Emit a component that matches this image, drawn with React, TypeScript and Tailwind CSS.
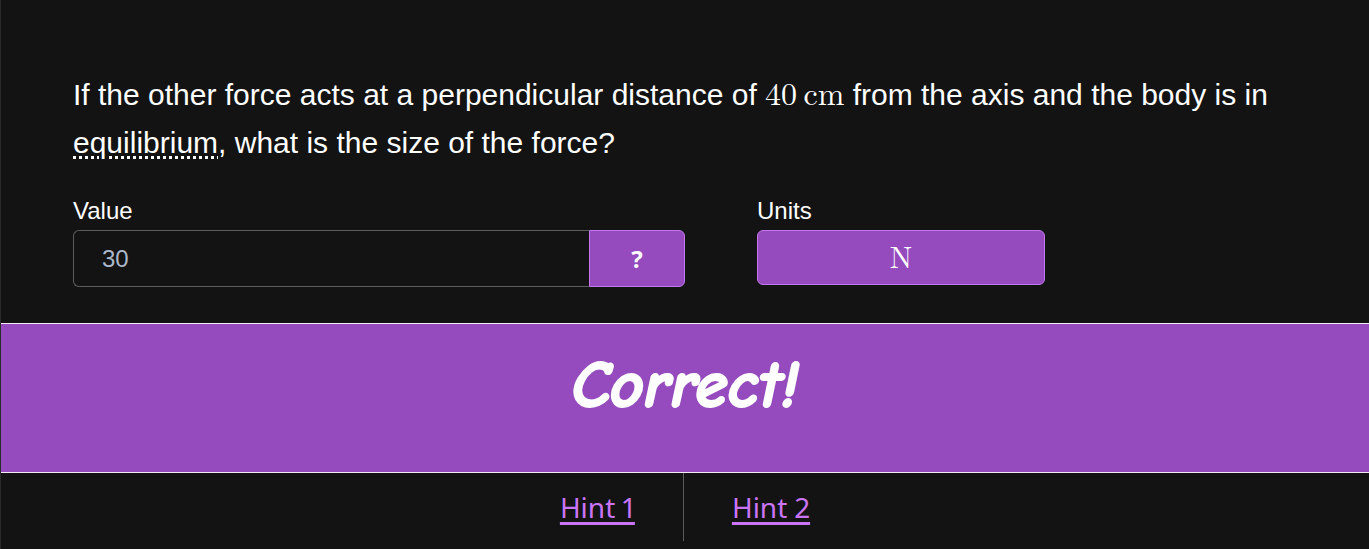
import { useState } from 'react';

function Maths({ children }: { children: React.ReactNode }) {
  return (
    <span className="font-['Latin_Modern_Roman','Liberation_Serif',serif] text-[32px] leading-none">
      {children}
    </span>
  );
}

function AnswerFields() {
  const [value, setValue] = useState('30');
  return (
    <div className="mt-7 flex gap-[72px]">
      <div className="w-1/2">
        <label htmlFor="value" className="block text-2xl leading-8">
          Value
        </label>
        <div className="mt-[3px] flex h-[57px]">
          <input
            id="value"
            value={value}
            onChange={(e) => setValue(e.target.value)}
            className="min-w-0 flex-1 rounded-l-md border border-r-0 border-[#5c5c5c] bg-transparent px-7 text-2xl text-[#abb8c9] outline-none"
          />
          <button
            type="button"
            aria-label="Help with the value"
            className="w-24 rounded-r-md border border-[#c477ee] bg-[#954bbd] font-['Noto_Sans',sans-serif] text-2xl font-bold"
          >
            ?
          </button>
        </div>
      </div>
      <div className="w-72">
        <label htmlFor="units" className="block text-2xl leading-8">
          Units
        </label>
        <button
          id="units"
          type="button"
          className="mt-[3px] h-[55px] w-full rounded-md border border-[#c477ee] bg-[#954bbd] pb-1 font-['Latin_Modern_Roman','Liberation_Serif',serif] text-[30px] leading-none"
        >
          N
        </button>
      </div>
    </div>
  );
}

export default function App() {
  return (
    <main className="min-h-screen border-l border-[#2a2a2a] bg-[#131313] font-['Liberation_Sans',Arial,sans-serif] text-white">
      <section className="px-[72px] pt-[71px] pb-9">
        <p className="text-3xl leading-12">
          If the other force acts at a perpendicular distance of <Maths>40&thinsp;cm</Maths> from the
          axis and the body is in{' '}
          <span className="underline decoration-dotted decoration-3 underline-offset-3">
            equilibrium
          </span>
          , what is the size of the force?
        </p>
        <AnswerFields />
      </section>

      <section
        role="status"
        className="flex h-[150px] justify-center border-y border-[#f3eaf7] bg-[#954bbd] pt-6"
      >
        <p className="font-['Segoe_Print','Comic_Neue',Lato,cursive] text-[66px] leading-[76px] font-black italic [-webkit-text-stroke:2px_white]">
          Correct!
        </p>
      </section>

      <nav
        aria-label="Hints"
        className="flex justify-center font-['Noto_Sans',sans-serif] text-[28px] leading-[68px] text-[#c974f5] proportional-nums"
      >
        <a href="#hint-1" className="border-r border-[#5c5c5c] px-12 underline decoration-3 underline-offset-4">
          Hint 1
        </a>
        <a href="#hint-2" className="px-12 underline decoration-3 underline-offset-4">
          Hint 2
        </a>
      </nav>
    </main>
  );
}
